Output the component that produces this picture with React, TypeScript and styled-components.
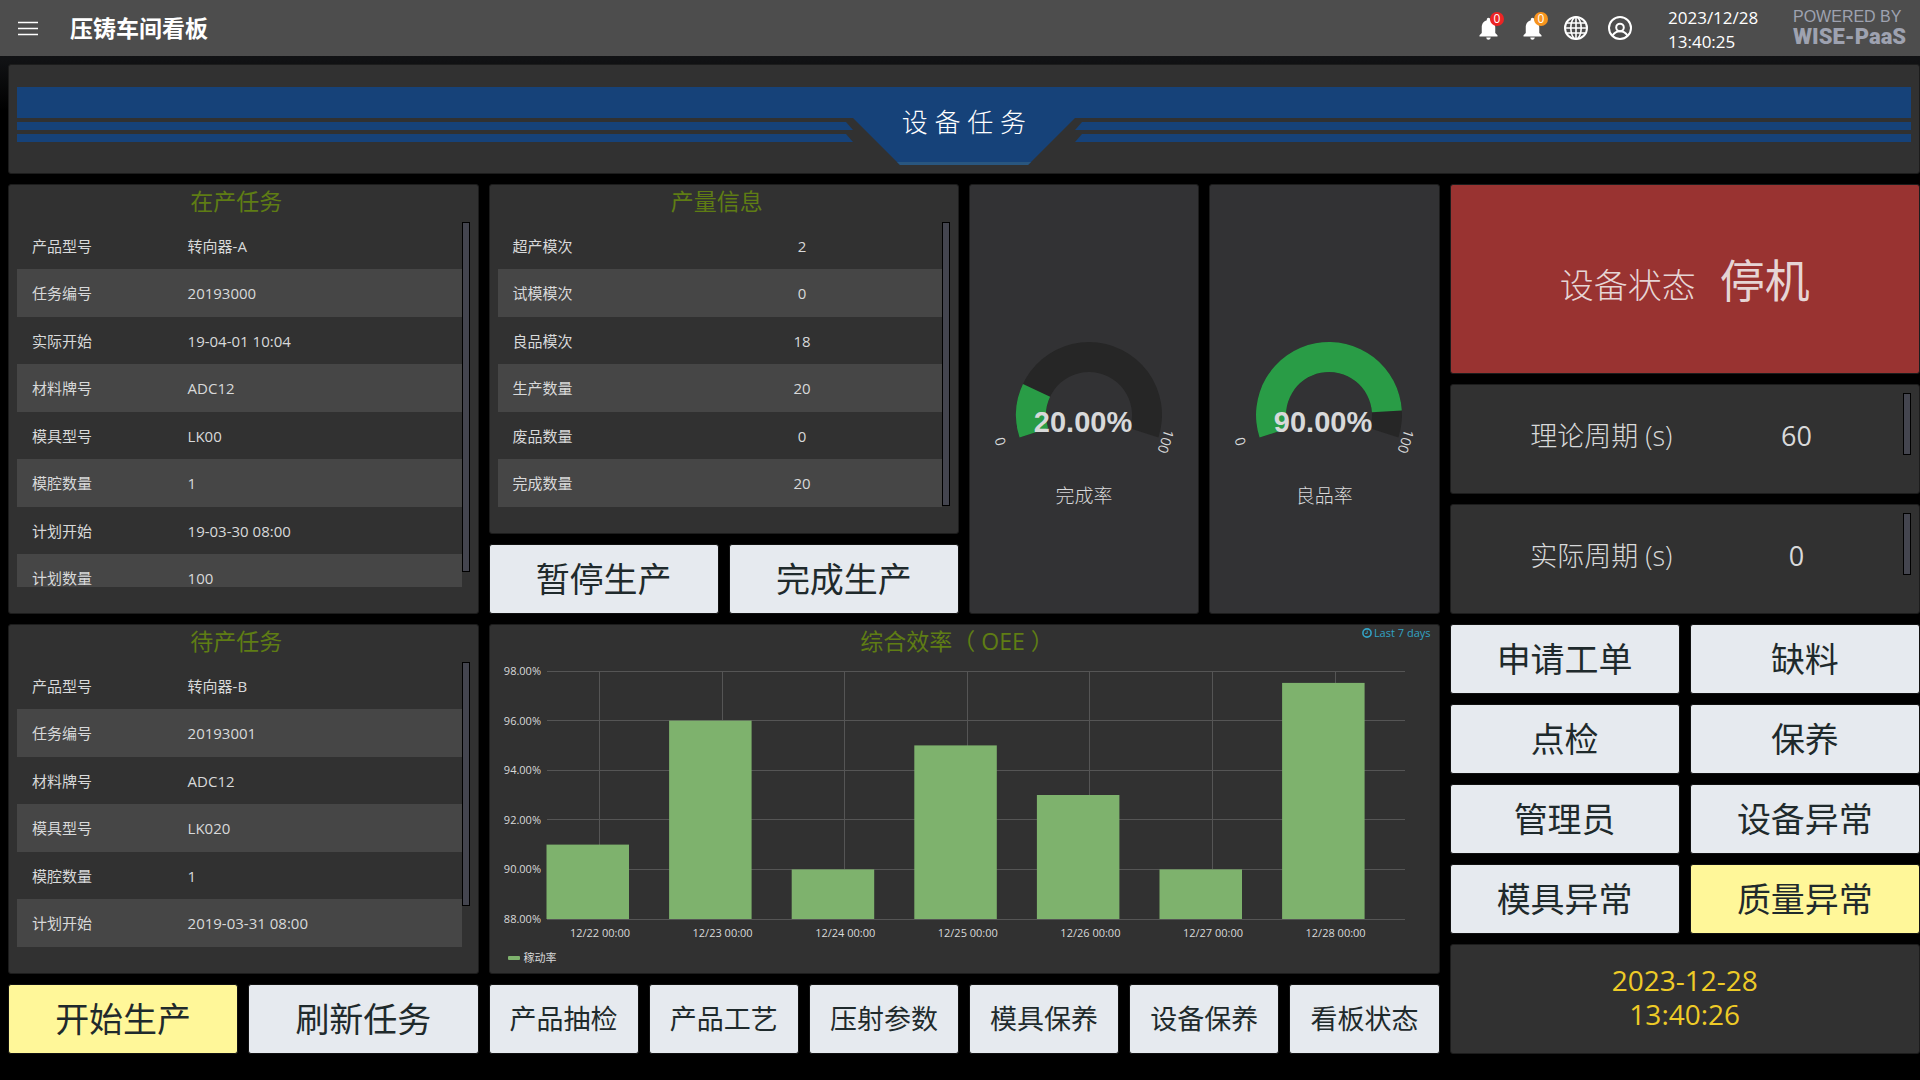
import React from 'react';
import styled, { createGlobalStyle, css } from 'styled-components';
import { MdNotifications } from 'react-icons/md';

const sans = `"Open Sans", "Noto Sans", "Noto Sans CJK SC", sans-serif`;
const grotesque = `"Liberation Sans", Arial, sans-serif`;
const brandFace = `Roboto, "Liberation Sans", sans-serif`;

const GlobalStyle = createGlobalStyle`
  * { box-sizing: border-box; }
  html { background: #000; }
  body {
    margin: 0;
    min-height: 100vh;
    background: linear-gradient(180deg, #131416 0, #111214 60px, #000 110px);
    color: #d8d9da;
    font-family: ${sans};
    font-size: 15px;
  }
  h1, h2, p { margin: 0; font-weight: 400; }
  button { font-family: inherit; cursor: pointer; }
`;

/* ---------- top bar ---------- */

const TopBar = styled.header`
  display: flex;
  align-items: center;
  height: 56px;
  padding: 0 15px 0 16px;
  background: #4d4d4d;
  color: #fff;
`;

const IconButton = styled.button`
  position: relative;
  display: flex;
  align-items: center;
  justify-content: center;
  width: 44px;
  height: 44px;
  padding: 0;
  border: 0;
  background: none;
  color: #fff;
`;

const MenuButton = styled(IconButton)`
  width: 24px;
  margin-right: 30px;
`;

const AppTitle = styled.h1`
  flex: 1;
  font-size: 23px;
  font-weight: 700;
  line-height: 32px;
`;

const Badge = styled.span<{ $color: string }>`
  position: absolute;
  top: 6px;
  right: 6px;
  width: 14px;
  height: 14px;
  border-radius: 7px;
  background: ${(p) => p.$color};
  font-size: 12px;
  line-height: 14px;
  text-align: center;
`;

const HeaderClock = styled.time`
  width: 125px;
  margin-left: 26px;
  padding-top: 4px;
  font-size: 17px;
  line-height: 24px;
`;

const HeaderDate = styled.span`
  display: block;
`;

const Brand = styled.div`
  display: flex;
  flex-direction: column;
  width: 112px;
  color: #9ea2b0;
  white-space: nowrap;
`;

const BrandLead = styled.span`
  font-family: ${grotesque};
  font-size: 16px;
  line-height: 18px;
`;

const BrandName = styled.strong`
  font-family: ${brandFace};
  font-size: 22px;
  font-weight: 900;
  line-height: 22px;
`;

/* ---------- dashboard grid ---------- */

const Board = styled.main`
  display: grid;
  grid-template-columns: repeat(24, minmax(0, 1fr));
  grid-auto-rows: 30px;
  gap: 10px;
  padding: 8px 0 26px 8px;
`;

type Place = { $col: number; $w: number; $row: number; $h: number };

const place = css<Place>`
  grid-column: ${(p) => p.$col} / span ${(p) => p.$w};
  grid-row: ${(p) => p.$row} / span ${(p) => p.$h};
`;

const Panel = styled.section<Place & { $tone?: string }>`
  ${place}
  display: flex;
  flex-direction: column;
  min-width: 0;
  overflow: hidden;
  border: 1px solid #1c1c1c;
  border-radius: 3px;
  background: ${(p) => p.$tone ?? '#313131'};
`;

const Action = styled.button<Place & { $size: number; $hot?: boolean }>`
  ${place}
  padding: 0;
  border: 1px solid #111;
  border-radius: 3px;
  background: ${(p) => (p.$hot ? '#fff799' : '#e6eaef')};
  color: #1f2a2c;
  font-size: ${(p) => p.$size}px;
  line-height: 40px;
`;

const PanelTitle = styled.h2`
  padding-right: 14px;
  margin-bottom: 4px;
  color: #5f7d14;
  font-size: 23px;
  line-height: 33px;
  text-align: center;
`;

/* ---------- banner ---------- */

const Banner = styled.div`
  display: grid;
  justify-items: center;
  margin: 22px 8px 0;
`;

const BannerLines = styled.div`
  grid-area: 1 / 1;
  justify-self: stretch;
`;

const BannerBar = styled.div`
  height: 31px;
  margin-bottom: 4px;
  background: #164279;
`;

const StripeRow = styled.div`
  display: flex;
  gap: 222px;
  margin-bottom: 4px;
`;

const Stripe = styled.div<{ $right?: boolean }>`
  flex: 1;
  height: 8px;
  background: #164279;
  clip-path: ${(p) =>
    p.$right
      ? 'polygon(7px 0, 100% 0, 100% 100%, 0 100%)'
      : 'polygon(0 0, calc(100% - 7px) 0, 100% 100%, 0 100%)'};
`;

const BannerPlate = styled.h2`
  grid-area: 1 / 1;
  width: 222px;
  height: 78px;
  border-bottom: 3px solid #29567f;
  background: #164279;
  clip-path: polygon(0 0, 100% 0, 100% 31px, 175px 100%, 47px 100%, 0 31px);
  color: #fff;
  font-size: 26px;
  font-weight: 300;
  line-height: 70px;
  text-align: center;
`;

/* ---------- tables ---------- */

const ScrollArea = styled.div`
  display: flex;
  flex: 1;
  align-items: flex-start;
  min-height: 0;
  margin: 0 8px 26px;
  overflow: hidden;
`;

const Thumb = styled.div<{ $length: number }>`
  flex: none;
  width: 8px;
  height: ${(p) => p.$length}px;
  border: 1px solid #000;
  background: #44454f;
`;

const Table = styled.table<{ $split: number; $centered?: boolean }>`
  flex: 1;
  border-collapse: collapse;
  table-layout: fixed;
  line-height: 24px;
  tr { height: 47px; }
  tr:nth-child(even) { height: 48px; background: #464646; }
  th, td { padding: 0 15px; font-weight: 400; text-align: left; }
  th { width: ${(p) => p.$split}%; }
  td { text-align: ${(p) => (p.$centered ? 'center' : 'left')}; }
`;

const CycleRow = styled.dl`
  display: flex;
  flex: 1;
  align-items: flex-start;
  margin: 8px 8px 0;
  font-size: 27px;
  line-height: 86px;
`;

const CycleName = styled.dt`
  flex: none;
  width: 64%;
  padding-right: 4px;
  font-weight: 300;
  text-align: center;
`;

const CycleValue = styled.dd`
  flex: 1;
  margin: 0;
  padding-right: 58px;
  text-align: center;
`;

/* ---------- status, gauges, clock ---------- */

const StatusLine = styled.p`
  display: flex;
  flex: 1;
  align-items: baseline;
  justify-content: center;
  gap: 24px;
  padding-top: 60px;
  color: #e6d5d5;
  font-size: 34px;
  font-weight: 300;
  line-height: 72px;
`;

const StatusValue = styled.strong`
  font-size: 45px;
  font-weight: 400;
`;

const GaugeBody = styled.figure`
  display: flex;
  flex-direction: column;
  align-items: center;
  margin: 0;
  padding-top: 147px;
`;

const GaugeLabel = styled.figcaption`
  margin-top: 20px;
  font-size: 19px;
  font-weight: 300;
  line-height: 28px;
`;

const BigClock = styled.time`
  flex: 1;
  padding-top: 18px;
  color: #eecb27;
  font-size: 28px;
  line-height: 34px;
  text-align: center;
`;

/* ---------- chart ---------- */

const ChartPanel = styled(Panel)`
  position: relative;
`;

const RangeNote = styled.a`
  position: absolute;
  top: 0;
  right: 8px;
  display: flex;
  align-items: center;
  gap: 2px;
  color: #33a2c4;
  font-size: 11px;
  line-height: 16px;
  text-decoration: none;
`;

const ChartDrawing = styled.svg`
  display: block;
  width: 100%;
  font-family: ${sans};
  font-size: 11px;
`;

const Legend = styled.div`
  display: flex;
  align-items: center;
  gap: 4px;
  padding-left: 18px;
  font-size: 11px;
  line-height: 18px;
`;

const LegendMark = styled.span`
  width: 12px;
  height: 4px;
  border-radius: 1px;
  background: #7eb26d;
`;

type Row = [string, string];

const running: Row[] = [
  ['产品型号', '转向器-A'],
  ['任务编号', '20193000'],
  ['实际开始', '19-04-01 10:04'],
  ['材料牌号', 'ADC12'],
  ['模具型号', 'LK00'],
  ['模腔数量', '1'],
  ['计划开始', '19-03-30 08:00'],
  ['计划数量', '100'],
];

const output: Row[] = [
  ['超产模次', '2'],
  ['试模模次', '0'],
  ['良品模次', '18'],
  ['生产数量', '20'],
  ['废品数量', '0'],
  ['完成数量', '20'],
];

const waiting: Row[] = [
  ['产品型号', '转向器-B'],
  ['任务编号', '20193001'],
  ['材料牌号', 'ADC12'],
  ['模具型号', 'LK020'],
  ['模腔数量', '1'],
  ['计划开始', '2019-03-31 08:00'],
];

const sideActions = ['申请工单', '缺料', '点检', '保养', '管理员', '设备异常', '模具异常', '质量异常'];
const bottomActions = ['产品抽检', '产品工艺', '压射参数', '模具保养', '设备保养', '看板状态'];

const oee = [
  { day: '12/22', value: 91 },
  { day: '12/23', value: 96 },
  { day: '12/24', value: 90 },
  { day: '12/25', value: 95 },
  { day: '12/26', value: 93 },
  { day: '12/27', value: 90 },
  { day: '12/28', value: 97.52 },
];

function DataTable({ rows, thumb, split, centered }: { rows: Row[]; thumb: number; split: number; centered?: boolean }) {
  return (
    <ScrollArea>
      <Table $split={split} $centered={centered}>
        <tbody>
          {rows.map(([name, value]) => (
            <tr key={name}>
              <th scope="row">{name}</th>
              <td>{value}</td>
            </tr>
          ))}
        </tbody>
      </Table>
      <Thumb $length={thumb} />
    </ScrollArea>
  );
}

function GlobeIcon() {
  return (
    <svg width="24" height="24" viewBox="0 0 24 24" fill="none" stroke="currentColor" strokeWidth="1.6">
      <circle cx="12" cy="12" r="11" strokeWidth="2" />
      <ellipse cx="12" cy="12" rx="5.2" ry="11" />
      <path d="M12 1v22M1 12h22M3 7h18M3 17h18" />
    </svg>
  );
}

function AccountIcon() {
  return (
    <svg width="24" height="24" viewBox="0 0 24 24" fill="none" stroke="currentColor" strokeWidth="2">
      <circle cx="12" cy="12" r="11" />
      <circle cx="12" cy="11.5" r="3.8" />
      <path d="M4.6 19.6c1.6-2.9 4.2-4.3 7.4-4.3s5.8 1.4 7.4 4.3" />
    </svg>
  );
}

const SWEEP = 216;

function arc(from: number, to: number) {
  const cx = 105;
  const cy = 83;
  const point = (r: number, share: number) => {
    const a = ((162 + share * SWEEP) * Math.PI) / 180;
    return `${(cx + r * Math.cos(a)).toFixed(2)} ${(cy + r * Math.sin(a)).toFixed(2)}`;
  };
  const large = (to - from) * SWEEP > 180 ? 1 : 0;
  return `M${point(73, from)} A73 73 0 ${large} 1 ${point(73, to)} L${point(43, to)} A43 43 0 ${large} 0 ${point(43, from)} Z`;
}

function Gauge({ value, label }: { value: number; label: string }) {
  return (
    <GaugeBody>
      <svg width="200" height="130" viewBox="0 0 200 130" role="img" aria-label={label}>
        <path d={arc(0, 1)} fill="#262626" />
        <path d={arc(0, value / 100)} fill="#299c46" />
        <g fill="#d8d9da" fontFamily={sans} fontSize="14" textAnchor="middle">
          <text transform="translate(21 108) rotate(-108)">0</text>
          <text transform="translate(177 108) rotate(108)">100</text>
        </g>
        <text x="99" y="100" fill="#d8d9da" fontFamily={grotesque} fontSize="29" fontWeight="700" textAnchor="middle">
          {value.toFixed(2)}%
        </text>
      </svg>
      <GaugeLabel>{label}</GaugeLabel>
    </GaugeBody>
  );
}

function OeeChart() {
  const left = 57;
  const right = 915;
  const top = 9;
  const bottom = 257;
  const y = (v: number) => bottom - ((v - 88) / 10) * (bottom - top);
  return (
    <ChartDrawing viewBox="0 0 949 287" role="img" aria-label="综合效率">
      <g stroke="#555555" strokeWidth="1" shapeRendering="crispEdges">
        {[88, 90, 92, 94, 96, 98].map((v) => (
          <line key={v} x1={left} x2={right} y1={y(v)} y2={y(v)} />
        ))}
        {oee.map((d, i) => (
          <line key={d.day} x1={109.5 + i * 122.6} x2={109.5 + i * 122.6} y1={top} y2={bottom} />
        ))}
      </g>
      {oee.map((d, i) => (
        <rect key={d.day} x={56.5 + i * 122.6} y={y(d.value)} width="82.5" height={bottom - y(d.value)} fill="#7eb26d" />
      ))}
      <g fill="#d8d9da">
        {[88, 90, 92, 94, 96, 98].map((v) => (
          <text key={v} x={51} y={y(v) + 4} textAnchor="end">
            {v.toFixed(2)}%
          </text>
        ))}
        {oee.map((d, i) => (
          <text key={d.day} x={110 + i * 122.6} y={275} textAnchor="middle">
            {d.day} 00:00
          </text>
        ))}
      </g>
    </ChartDrawing>
  );
}

export default function App() {
  return (
    <>
      <GlobalStyle />
      <TopBar>
        <MenuButton aria-label="菜单">
          <svg width="24" height="24" viewBox="0 0 24 24" stroke="#fff" strokeWidth="1.4">
            <path d="M2 6.5h20M2 12.5h20M2 18.5h20" />
          </svg>
        </MenuButton>
        <AppTitle>压铸车间看板</AppTitle>
        <IconButton aria-label="告警">
          <MdNotifications size={27} />
          <Badge $color="#ed2424">0</Badge>
        </IconButton>
        <IconButton aria-label="通知">
          <MdNotifications size={27} />
          <Badge $color="#f7941d">0</Badge>
        </IconButton>
        <IconButton aria-label="语言">
          <GlobeIcon />
        </IconButton>
        <IconButton aria-label="账户">
          <AccountIcon />
        </IconButton>
        <HeaderClock>
          <HeaderDate>2023/12/28</HeaderDate>
          <HeaderDate>13:40:25</HeaderDate>
        </HeaderClock>
        <Brand>
          <BrandLead>POWERED BY</BrandLead>
          <BrandName>WISE-PaaS</BrandName>
        </Brand>
      </TopBar>

      <Board>
        <Panel $col={1} $w={24} $row={1} $h={3}>
          <Banner>
            <BannerLines>
              <BannerBar />
              <StripeRow>
                <Stripe />
                <Stripe $right />
              </StripeRow>
              <StripeRow>
                <Stripe />
                <Stripe $right />
              </StripeRow>
            </BannerLines>
            <BannerPlate>设 备 任 务</BannerPlate>
          </Banner>
        </Panel>

        <Panel $col={1} $w={6} $row={4} $h={11}>
          <PanelTitle>在产任务</PanelTitle>
          <DataTable rows={running} thumb={350} split={35} />
        </Panel>

        <Panel $col={7} $w={6} $row={4} $h={9}>
          <PanelTitle>产量信息</PanelTitle>
          <DataTable rows={output} thumb={284} split={37} centered />
        </Panel>
        <Action $col={7} $w={3} $row={13} $h={2} $size={34}>暂停生产</Action>
        <Action $col={10} $w={3} $row={13} $h={2} $size={34}>完成生产</Action>

        <Panel $col={13} $w={3} $row={4} $h={11} $tone="#323234">
          <Gauge value={20} label="完成率" />
        </Panel>
        <Panel $col={16} $w={3} $row={4} $h={11} $tone="#323234">
          <Gauge value={90} label="良品率" />
        </Panel>

        <Panel $col={19} $w={6} $row={4} $h={5} $tone="#993331">
          <StatusLine>
            设备状态
            <StatusValue>停机</StatusValue>
          </StatusLine>
        </Panel>
        <Panel $col={19} $w={6} $row={9} $h={3}>
          <CycleRow>
            <CycleName>理论周期 (s)</CycleName>
            <CycleValue>60</CycleValue>
            <Thumb $length={62} />
          </CycleRow>
        </Panel>
        <Panel $col={19} $w={6} $row={12} $h={3}>
          <CycleRow>
            <CycleName>实际周期 (s)</CycleName>
            <CycleValue>0</CycleValue>
            <Thumb $length={62} />
          </CycleRow>
        </Panel>

        <Panel $col={1} $w={6} $row={15} $h={9}>
          <PanelTitle>待产任务</PanelTitle>
          <DataTable rows={waiting} thumb={244} split={35} />
        </Panel>
        <Action $col={1} $w={3} $row={24} $h={2} $size={34} $hot>开始生产</Action>
        <Action $col={4} $w={3} $row={24} $h={2} $size={34}>刷新任务</Action>

        <ChartPanel $col={7} $w={12} $row={15} $h={9}>
          <PanelTitle>综合效率（ OEE ）</PanelTitle>
          <RangeNote href="#range">
            <svg width="10" height="10" viewBox="0 0 10 10" fill="none" stroke="#33a2c4">
              <circle cx="5" cy="5" r="4.1" strokeWidth="1.6" />
              <path d="M5.2 2.6v2.8H3.2" />
            </svg>
            Last 7 days
          </RangeNote>
          <OeeChart />
          <Legend>
            <LegendMark />
            稼动率
          </Legend>
        </ChartPanel>
        {bottomActions.map((name, i) => (
          <Action key={name} $col={7 + i * 2} $w={2} $row={24} $h={2} $size={27}>{name}</Action>
        ))}

        {sideActions.map((name, i) => (
          <Action
            key={name}
            $col={i % 2 ? 22 : 19}
            $w={3}
            $row={15 + Math.floor(i / 2) * 2}
            $h={2}
            $size={34}
            $hot={name === '质量异常'}
          >
            {name}
          </Action>
        ))}
        <Panel $col={19} $w={6} $row={23} $h={3}>
          <BigClock>
            2023-12-28
            <br />
            13:40:26
          </BigClock>
        </Panel>
      </Board>
    </>
  );
}
